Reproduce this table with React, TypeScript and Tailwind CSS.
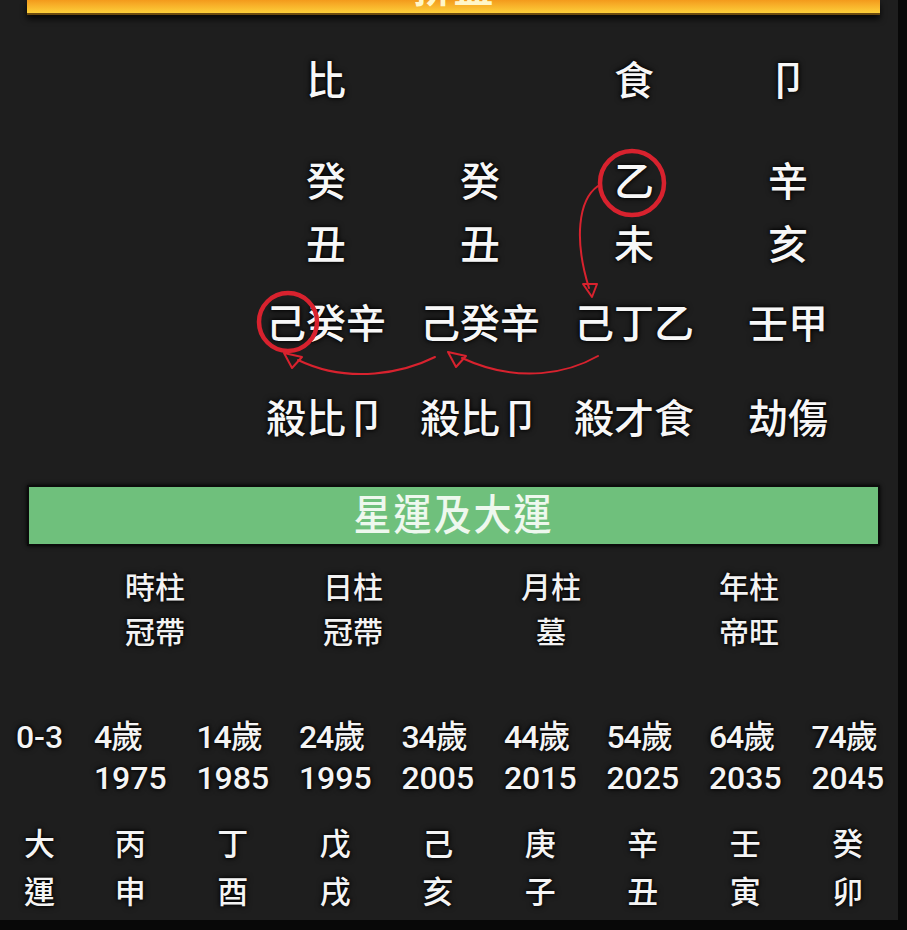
import React from "react";

// 八字排盤 screen: pillars, hidden stems, 星運 and 大運 rows
const FONT = { fontFamily: "Roboto, 'Noto Sans CJK TC', 'Noto Sans CJK SC', sans-serif" };

const TEN_GODS = ["比", "", "食", "卩"];
const STEMS = ["癸", "癸", "乙", "辛"];
const BRANCHES = ["丑", "丑", "未", "亥"];
const HIDDEN = ["己癸辛", "己癸辛", "己丁乙", "壬甲"];
const HIDDEN_GODS = ["殺比卩", "殺比卩", "殺才食", "劫傷"];

const PILLARS = [
  { name: "時柱", star: "冠帶" },
  { name: "日柱", star: "冠帶" },
  { name: "月柱", star: "墓" },
  { name: "年柱", star: "帝旺" },
];

const LUCK = [
  { age: "4歲", year: "1975", stem: "丙", branch: "申" },
  { age: "14歲", year: "1985", stem: "丁", branch: "酉" },
  { age: "24歲", year: "1995", stem: "戊", branch: "戌" },
  { age: "34歲", year: "2005", stem: "己", branch: "亥" },
  { age: "44歲", year: "2015", stem: "庚", branch: "子" },
  { age: "54歲", year: "2025", stem: "辛", branch: "丑" },
  { age: "64歲", year: "2035", stem: "壬", branch: "寅" },
  { age: "74歲", year: "2045", stem: "癸", branch: "卯" },
];

const glow = "[text-shadow:0_0_3px_#000,0_0_6px_#000]";

function PillarRow({ items, className }: { items: string[]; className: string }) {
  return (
    <div className={`grid grid-cols-[repeat(4,154px)] pl-[249px] ${className}`}>
      {items.map((t, i) => (
        <div key={i} className={`flex items-center justify-center text-[40px] font-medium leading-none text-[#f7f7f7] ${glow}`}>
          {t}
        </div>
      ))}
    </div>
  );
}

export default function App() {
  return (
    <div
      className="relative w-[907px] h-[930px] overflow-hidden bg-[#1e1e1e] border-r-[9px] border-b-[10px] border-[#080808] flex flex-col"
      style={FONT}
    >
      {/* Top bar (cut off) */}
      <div className="ml-[27px] mr-[18px] h-[15px] overflow-hidden bg-gradient-to-b from-[#f39a1c] to-[#fdd03a] border-b-2 border-[#6b4a10] shadow-[0_4px_6px_rgba(0,0,0,0.8)] flex justify-center">
        <span className="text-[40px] leading-none -mt-[31px] text-[#fff6c8] font-bold">排盤</span>
      </div>

      {/* Four pillars */}
      <PillarRow items={TEN_GODS} className="mt-[42px] h-[50px]" />
      <PillarRow items={STEMS} className="mt-[51px] h-[50px]" />
      <PillarRow items={BRANCHES} className="mt-[13px] h-[50px]" />
      <PillarRow items={HIDDEN} className="mt-[29px] h-[50px]" />
      <PillarRow items={HIDDEN_GODS} className="mt-[45px] h-[50px]" />

      {/* Section header */}
      <div className="ml-[27px] mr-[18px] mt-[40px] h-[61px] bg-[#6fc07c] border-2 border-[#0c0c0c] shadow-[0_0_4px_rgba(0,0,0,0.9)] flex items-center justify-center">
        <span className="text-[38px] font-medium leading-none text-[#eef8ee] tracking-[2px] scale-y-110">星運及大運</span>
      </div>

      {/* Stars */}
      <div className="mt-[19px] grid grid-cols-[repeat(4,198px)] pl-[56px]">
        {PILLARS.map((p) => (
          <div key={p.name} className={`flex flex-col items-center text-[30px] font-medium text-[#f2f2f2] ${glow}`}>
            <div className="h-[45px] flex items-center">{p.name}</div>
            <div className="h-[45px] flex items-center">{p.star}</div>
          </div>
        ))}
      </div>

      {/* Ages and years */}
      <div className="mt-[61px] grid grid-cols-[79px_repeat(8,102.5px)] text-[32px] font-medium text-[#f4f4f4]">
        <div className={`h-[41px] flex items-center justify-center ${glow}`}>0-3</div>
        {LUCK.map((l) => (
          <div key={l.year} className="flex justify-center">
            <div className={`flex flex-col items-start ${glow}`}>
              <div className="h-[41px] flex items-center tracking-[-1px]">{l.age}</div>
              <div className="h-[41px] flex items-center">{l.year}</div>
            </div>
          </div>
        ))}
      </div>

      {/* 大運 stems and branches */}
      <div className="mt-[23px] grid grid-cols-[79px_repeat(8,102.5px)] text-[31px] font-medium text-[#f4f4f4]">
        <div className={`flex flex-col items-center ${glow}`}>
          <div className="h-[48px] flex items-center">大</div>
          <div className="h-[48px] flex items-center">運</div>
        </div>
        {LUCK.map((l) => (
          <div key={l.year} className={`flex flex-col items-center ${glow}`}>
            <div className="h-[48px] flex items-center">{l.stem}</div>
            <div className="h-[48px] flex items-center">{l.branch}</div>
          </div>
        ))}
      </div>

      {/* Hand-drawn red marks */}
      <svg className="absolute left-0 top-0 pointer-events-none" width="907" height="930" fill="none">
        <g stroke="#d8222e" strokeLinecap="round" strokeLinejoin="round">
          <circle cx="632" cy="183" r="32" strokeWidth="4.5" />
          <circle cx="288" cy="322" r="29" strokeWidth="4.5" />
          <path d="M598 186 C578 200 574 240 589 288" strokeWidth="2" />
          <path d="M583 284 L597 284 L592 297 Z" strokeWidth="2" />
          <path d="M598 356 C570 372 520 385 462 358" strokeWidth="2" />
          <path d="M448 352 L466 356 L456 367 Z" strokeWidth="2" />
          <path d="M435 357 C405 372 350 385 298 360" strokeWidth="2" />
          <path d="M284 353 L302 357 L292 368 Z" strokeWidth="2" />
        </g>
      </svg>
    </div>
  );
}
